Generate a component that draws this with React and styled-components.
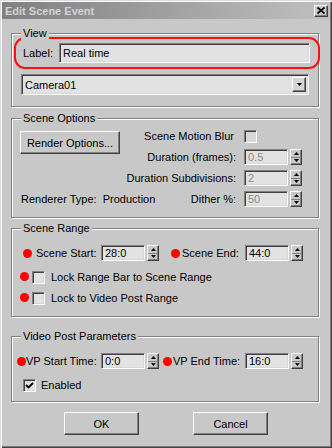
import React from 'react';
import styled, { createGlobalStyle, css } from 'styled-components';

const GlobalStyle = createGlobalStyle`
  html, body {
    margin: 0;
    padding: 0;
    background: #c8c8c8;
  }
  body {
    font-family: "Liberation Sans", Arial, sans-serif;
    font-size: 11px;
    color: #000;
  }
  * {
    box-sizing: border-box;
  }
`;

const BG = '#c8c8c8';

const sunken = css`
  border-top: 1px solid #808080;
  border-left: 1px solid #808080;
  border-right: 1px solid #fff;
  border-bottom: 1px solid #fff;
  box-shadow: inset 1px 1px 0 #404040, inset -1px -1px 0 #d8d8d8;
`;

const raised = css`
  border-top: 1px solid #fff;
  border-left: 1px solid #fff;
  border-right: 1px solid #404040;
  border-bottom: 1px solid #404040;
  box-shadow: inset -1px -1px 0 #808080;
`;

const Window = styled.div`
  width: 332px;
  height: 448px;
  padding: 2px;
  display: flex;
  flex-direction: column;
  background: ${BG};
  box-shadow: inset 1px 1px 0 #dcdcdc, inset 2px 2px 0 #fff,
    inset -1px -1px 0 #404040, inset -2px -2px 0 #808080;
`;

const TitleBar = styled.div`
  height: 17px;
  display: flex;
  align-items: center;
  justify-content: space-between;
  padding: 0 2px 0 3px;
  background: linear-gradient(to right, #808080, #c0c0c0);
  color: #d4d4d4;
  font-weight: bold;
  font-size: 11px;
`;

const CloseButton = styled.div`
  width: 14px;
  height: 12px;
  display: flex;
  align-items: center;
  justify-content: center;
  background: ${BG};
  ${raised};
`;

const Content = styled.div`
  display: flex;
  flex-direction: column;
  padding: 14px 11px 0 9px;
`;

const Group = styled.div`
  position: relative;
  border: 1px solid #808080;
  box-shadow: 1px 1px 0 #fff, inset 1px 1px 0 #fff;
  margin-top: ${p => p.$top || 0}px;
  padding: ${p => p.$pad};
`;

const GroupTitle = styled.span`
  position: absolute;
  top: -7px;
  left: 9px;
  padding: 0 2px;
  line-height: 13px;
  background: ${BG};
`;

const Highlight = styled.div`
  display: flex;
  align-items: center;
  height: 32px;
  margin: 0 -11px 0 -7px;
  padding: 0 8px 0 7px;
  border: 2px solid #ff1010;
  border-radius: 11px;
`;

const FieldLabel = styled.span`
  flex: none;
  width: ${p => p.$w}px;
  white-space: nowrap;
`;

const TextBox = styled.div`
  flex: ${p => (p.$w ? 'none' : 1)};
  width: ${p => (p.$w ? `${p.$w}px` : 'auto')};
  height: ${p => p.$h || 16}px;
  display: flex;
  align-items: center;
  padding-left: 3px;
  background: #e2e2e2;
  color: ${p => (p.$disabled ? '#8a8a8a' : '#000')};
  ${sunken};
`;

const Dropdown = styled(TextBox)`
  margin-top: 5px;
  justify-content: space-between;
  padding-right: 2px;
`;

const DropArrow = styled.div`
  width: 14px;
  height: 15px;
  display: flex;
  align-items: center;
  justify-content: center;
  background: #d4d4d4;
  ${raised};
`;

const Spinner = styled.div`
  flex: none;
  width: 12px;
  height: 16px;
  margin-left: 2px;
  display: flex;
  flex-direction: column;
  background: ${BG};
  ${raised};
`;

const SpinHalf = styled.div`
  flex: 1;
  display: flex;
  align-items: center;
  justify-content: center;
  & + & {
    border-top: 1px solid #808080;
  }
`;

const SpinField = styled.div`
  display: flex;
  align-items: center;
`;

const OptionsGrid = styled.div`
  display: grid;
  grid-template-columns: minmax(0, 1fr) auto 58px;
  grid-auto-rows: 16px;
  column-gap: 8px;
  row-gap: 5px;
  align-items: center;
`;

const RightLabel = styled.span`
  grid-column: 2;
  justify-self: end;
  white-space: nowrap;
  margin-right: ${p => p.$shift || 0}px;
`;

const Button = styled.div`
  width: ${p => p.$w}px;
  height: 23px;
  display: flex;
  align-items: center;
  justify-content: center;
  background: ${BG};
  ${raised};
`;

const RenderButton = styled(Button)`
  grid-column: 1;
  grid-row: 1 / span 2;
  align-self: start;
  margin: 3px 0 0 -1px;
`;

const RendererType = styled.span`
  grid-column: 1;
  grid-row: 4;
  white-space: nowrap;
`;

const Row = styled.div`
  display: flex;
  align-items: center;
  height: 16px;
  margin-top: ${p => p.$top || 0}px;
  padding-left: ${p => p.$indent || 0}px;
`;

const Dot = styled.span`
  flex: none;
  width: 9px;
  height: 9px;
  border-radius: 50%;
  background: #ff0000;
  margin-left: ${p => p.$left || 0}px;
  margin-right: ${p => p.$gap || 0}px;
  margin-top: ${p => p.$raise ? -2 : 0}px;
`;

const Check = styled.div`
  flex: none;
  width: 13px;
  height: 13px;
  margin-right: ${p => p.$gap || 6}px;
  display: flex;
  align-items: center;
  justify-content: center;
  background: ${p => (p.$disabled ? '#d8d8d8' : '#e2e2e2')};
  ${sunken};
`;

const ButtonRow = styled.div`
  display: flex;
  justify-content: center;
  gap: 54px;
  margin-top: 10px;
  padding-left: 2px;
`;

const Up = () => (
  <svg width="5" height="3" viewBox="0 0 5 3">
    <path d="M2.5 0 L5 3 L0 3 Z" fill="#000" />
  </svg>
);

const Down = () => (
  <svg width="5" height="3" viewBox="0 0 5 3">
    <path d="M0 0 L5 0 L2.5 3 Z" fill="#000" />
  </svg>
);

const Spin = ({ value, disabled }) => (
  <SpinField>
    <TextBox $w={44} $disabled={disabled}>{value}</TextBox>
    <Spinner>
      <SpinHalf><Up /></SpinHalf>
      <SpinHalf><Down /></SpinHalf>
    </Spinner>
  </SpinField>
);

const CloseGlyph = () => (
  <svg width="8" height="7" viewBox="0 0 8 7">
    <path d="M0.5 0.5 L7.5 6.5 M7.5 0.5 L0.5 6.5" stroke="#000" strokeWidth="1.8" />
  </svg>
);

const CheckMark = () => (
  <svg width="9" height="9" viewBox="0 0 9 9">
    <path d="M1 4 L3.5 6.5 L8 2" stroke="#000" strokeWidth="1.8" fill="none" />
  </svg>
);

export default function App() {
  return (
    <>
      <GlobalStyle />
      <Window>
        <TitleBar>
          <span>Edit Scene Event</span>
          <CloseButton><CloseGlyph /></CloseButton>
        </TitleBar>
        <Content>
          <Group $pad="3px 9px 11px 9px">
            <GroupTitle>View</GroupTitle>
            <Highlight>
              <FieldLabel $w={36}>Label:</FieldLabel>
              <TextBox $h={20}>Real time</TextBox>
            </Highlight>
            <Dropdown $h={21}>
              <span>Camera01</span>
              <DropArrow><Down /></DropArrow>
            </Dropdown>
          </Group>

          <Group $top={11} $pad="9px 16px 10px 9px">
            <GroupTitle>Scene Options</GroupTitle>
            <OptionsGrid>
              <RenderButton $w={100}>Render Options...</RenderButton>
              <RightLabel $shift={2}>Scene Motion Blur</RightLabel>
              <Check $disabled />
              <RightLabel>Duration (frames):</RightLabel>
              <Spin value="0.5" disabled />
              <RightLabel>Duration Subdivisions:</RightLabel>
              <Spin value="2" disabled />
              <RendererType>Renderer Type:&nbsp; Production</RendererType>
              <RightLabel>Dither %:</RightLabel>
              <Spin value="50" disabled />
            </OptionsGrid>
          </Group>

          <Group $top={10} $pad="16px 9px 10px 0">
            <GroupTitle>Scene Range</GroupTitle>
            <Row $indent={11}>
              <Dot $gap={4} />
              <FieldLabel $w={65}>Scene Start:</FieldLabel>
              <Spin value="28:0" />
              <Dot $left={12} $gap={2} />
              <FieldLabel $w={63}>Scene End:</FieldLabel>
              <Spin value="44:0" />
            </Row>
            <Row $indent={8} $top={8}>
              <Dot $gap={3} $raise />
              <Check />
              <span>Lock Range Bar to Scene Range</span>
            </Row>
            <Row $indent={8} $top={5}>
              <Dot $gap={3} $raise />
              <Check />
              <span>Lock to Video Post Range</span>
            </Row>
          </Group>

          <Group $top={19} $pad="16px 9px 8px 0">
            <GroupTitle>Video Post Parameters</GroupTitle>
            <Row $indent={5}>
              <Dot />
              <FieldLabel $w={75}>VP Start Time:</FieldLabel>
              <Spin value="0:0" />
              <Dot $left={4} $gap={1} />
              <FieldLabel $w={72}>VP End Time:</FieldLabel>
              <Spin value="16:0" />
            </Row>
            <Row $indent={11} $top={8}>
              <Check $gap={5}><CheckMark /></Check>
              <span>Enabled</span>
            </Row>
          </Group>

          <ButtonRow>
            <Button $w={75}>OK</Button>
            <Button $w={75}>Cancel</Button>
          </ButtonRow>
        </Content>
      </Window>
    </>
  );
}
